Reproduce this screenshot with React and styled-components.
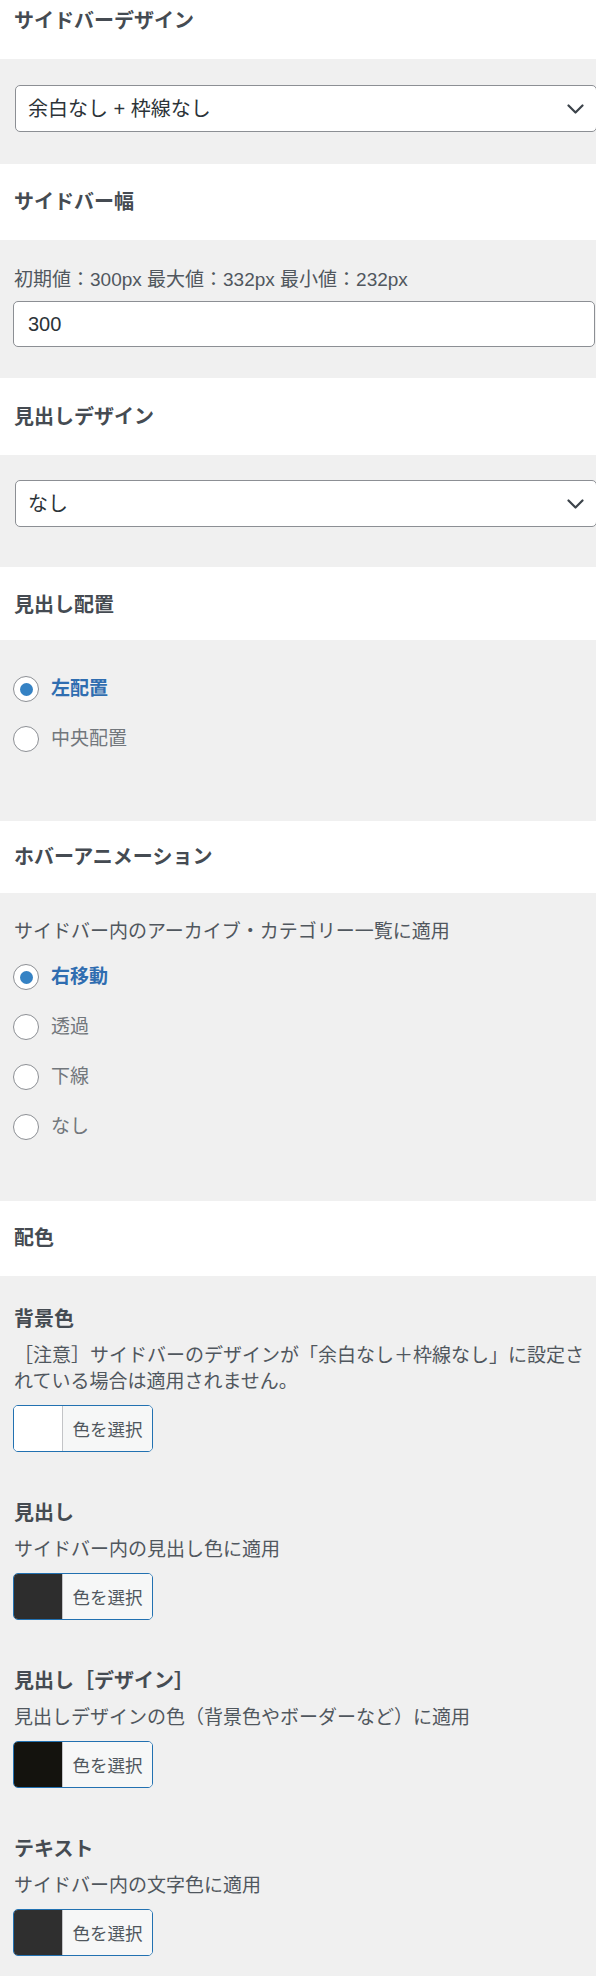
import React from 'react'
import styled, { createGlobalStyle } from 'styled-components'

const GlobalStyle = createGlobalStyle`
  * {
    box-sizing: border-box;
  }
  body {
    margin: 0;
    background: #f0f0f0;
    font-family: "Liberation Sans", "Noto Sans CJK JP", sans-serif;
  }
`

const sections = [
  { id: 'design', title: 'サイドバーデザイン' },
  { id: 'width', title: 'サイドバー幅' },
  { id: 'heading', title: '見出しデザイン' },
  { id: 'align', title: '見出し配置' },
  { id: 'hover', title: 'ホバーアニメーション' },
  { id: 'colors', title: '配色' },
]

const colorItems = [
  {
    title: '背景色',
    description:
      '［注意］サイドバーのデザインが「余白なし＋枠線なし」に設定されている場合は適用されません。',
    color: '#ffffff',
  },
  { title: '見出し', description: 'サイドバー内の見出し色に適用', color: '#2d2d2d' },
  {
    title: '見出し［デザイン］',
    description: '見出しデザインの色（背景色やボーダーなど）に適用',
    color: '#14130e',
  },
  { title: 'テキスト', description: 'サイドバー内の文字色に適用', color: '#2f2f2f' },
]

const Chevron = () => (
  <svg width="17" height="10" viewBox="0 0 17 10" fill="none">
    <path
      d="M1.5 1.5L8.5 8.5L15.5 1.5"
      stroke="#3c434a"
      strokeWidth="2.2"
      strokeLinecap="round"
      strokeLinejoin="round"
    />
  </svg>
)

const SelectControl = ({ value }) => (
  <StyledSelect>
    <StyledSelectValue>{value}</StyledSelectValue>
    <Chevron />
  </StyledSelect>
)

const RadioGroup = ({ name, options, checked }) => (
  <StyledRadioList>
    {options.map(option => (
      <StyledRadioRow key={option}>
        <StyledRadioInput
          type="radio"
          name={name}
          defaultChecked={option === checked}
        />
        <StyledRadioText $checked={option === checked}>{option}</StyledRadioText>
      </StyledRadioRow>
    ))}
  </StyledRadioList>
)

const ColorControl = ({ title, description, color }) => (
  <StyledColorItem>
    <StyledItemTitle>{title}</StyledItemTitle>
    <StyledDescription>{description}</StyledDescription>
    <StyledColorButton type="button">
      <StyledSwatch $color={color} />
      <StyledSwatchLabel>色を選択</StyledSwatchLabel>
    </StyledColorButton>
  </StyledColorItem>
)

const Header = ({ title, top = 24, bottom = 25 }) => (
  <StyledHeader $top={top} $bottom={bottom}>
    <StyledSectionTitle>{title}</StyledSectionTitle>
  </StyledHeader>
)

const App = () => {
  return (
    <>
      <GlobalStyle />
      <StyledPage>
        <Header title={sections[0].title} top={8} bottom={25} />
        <StyledPanel $top={26} $bottom={32} $left={15} $right={0}>
          <SelectControl value="余白なし + 枠線なし" />
        </StyledPanel>

        <Header title={sections[1].title} top={25} bottom={25} />
        <StyledPanel $top={27} $bottom={31} $right={1}>
          <StyledDescription>初期値：300px 最大値：332px 最小値：232px</StyledDescription>
          <StyledNumberInput type="number" defaultValue="300" $mt={8} />
        </StyledPanel>

        <Header title={sections[2].title} top={26} bottom={25} />
        <StyledPanel $top={25} $bottom={40} $left={15} $right={0}>
          <SelectControl value="なし" />
        </StyledPanel>

        <Header title={sections[3].title} top={25} bottom={22} />
        <StyledPanel $top={36} $bottom={69}>
          <RadioGroup name="align" options={['左配置', '中央配置']} checked="左配置" />
        </StyledPanel>

        <Header title={sections[4].title} top={23} bottom={23} />
        <StyledPanel $top={26} $bottom={61}>
          <StyledDescription>サイドバー内のアーカイブ・カテゴリー一覧に適用</StyledDescription>
          <StyledSpacer $h={19} />
          <RadioGroup
            name="hover"
            options={['右移動', '透過', '下線', 'なし']}
            checked="右移動"
          />
        </StyledPanel>

        <Header title={sections[5].title} top={24} bottom={25} />
        <StyledPanel $top={30} $bottom={20}>
          <StyledColorList>
            {colorItems.map(item => (
              <ColorControl key={item.title} {...item} />
            ))}
          </StyledColorList>
        </StyledPanel>
      </StyledPage>
    </>
  )
}

const StyledPage = styled.div`
  width: 596px;
  min-height: 1976px;
  overflow: hidden;
  background: #f0f0f0;
`

const StyledHeader = styled.div`
  background: #fff;
  padding: ${p => p.$top}px 14px ${p => p.$bottom}px;
`

const StyledSectionTitle = styled.h3`
  margin: 0;
  font-size: 20px;
  line-height: 26px;
  font-weight: 700;
  color: #454b52;
`

const StyledPanel = styled.div`
  background: #f0f0f0;
  padding: ${p => p.$top}px ${p => p.$right ?? 10}px ${p => p.$bottom}px
    ${p => p.$left ?? 13}px;
`

const StyledSpacer = styled.div`
  height: ${p => p.$h}px;
`

const StyledSelect = styled.div`
  display: flex;
  align-items: center;
  justify-content: space-between;
  width: calc(100% + 1px);
  height: 47px;
  padding: 0 12px 0 12px;
  background: #fff;
  border: 1px solid #8c8f94;
  border-radius: 5px;
`

const StyledSelectValue = styled.span`
  font-size: 20px;
  line-height: 26px;
  color: #2c3338;
`

const StyledDescription = styled.p`
  margin: 0;
  padding-left: 1px;
  font-size: 19px;
  line-height: 26px;
  color: #50575e;
`

const StyledNumberInput = styled.input`
  display: block;
  width: 100%;
  height: 46px;
  margin: ${p => p.$mt}px 0 0;
  padding: 0 14px;
  font-family: inherit;
  font-size: 20px;
  color: #2c3338;
  background: #fff;
  border: 1px solid #8c8f94;
  border-radius: 5px;
  appearance: textfield;
  outline: none;
  &::-webkit-inner-spin-button,
  &::-webkit-outer-spin-button {
    appearance: none;
    margin: 0;
  }
`

const StyledRadioList = styled.div`
  display: flex;
  flex-direction: column;
  gap: 24px;
`

const StyledRadioRow = styled.label`
  display: flex;
  align-items: center;
  gap: 12px;
  height: 26px;
  cursor: pointer;
`

const StyledRadioInput = styled.input`
  appearance: none;
  display: grid;
  place-content: center;
  width: 26px;
  height: 26px;
  margin: 0;
  background: #fff;
  border: 1.5px solid #8c8f94;
  border-radius: 50%;
  &::before {
    content: '';
    width: 13px;
    height: 13px;
    border-radius: 50%;
    background: #3582c4;
    transform: scale(0);
  }
  &:checked::before {
    transform: scale(1);
  }
`

const StyledRadioText = styled.span`
  font-size: 19px;
  line-height: 26px;
  font-weight: ${p => (p.$checked ? 700 : 400)};
  color: ${p => (p.$checked ? '#2f6db0' : '#72777c')};
`

const StyledColorList = styled.div`
  display: flex;
  flex-direction: column;
  gap: 48px;
`

const StyledColorItem = styled.div`
  display: flex;
  flex-direction: column;
  align-items: flex-start;
`

const StyledItemTitle = styled.h4`
  margin: 0 0 11px;
  padding-left: 1px;
  font-size: 20px;
  line-height: 26px;
  font-weight: 700;
  color: #454b52;
`

const StyledColorButton = styled.button`
  display: flex;
  width: 140px;
  height: 47px;
  margin-top: 10px;
  padding: 0;
  border: 1px solid #2271b1;
  border-radius: 5px;
  overflow: hidden;
  background: #f6f7f7;
  cursor: pointer;
`

const StyledSwatch = styled.span`
  width: 48px;
  height: 100%;
  background: ${p => p.$color};
`

const StyledSwatchLabel = styled.span`
  flex: 1;
  display: flex;
  align-items: center;
  justify-content: center;
  height: 100%;
  background: #f6f7f7;
  border-left: 1px solid #c3c4c7;
  font-family: "Noto Sans CJK JP", sans-serif;
  font-size: 17.5px;
  color: #50575e;
`

export default App
